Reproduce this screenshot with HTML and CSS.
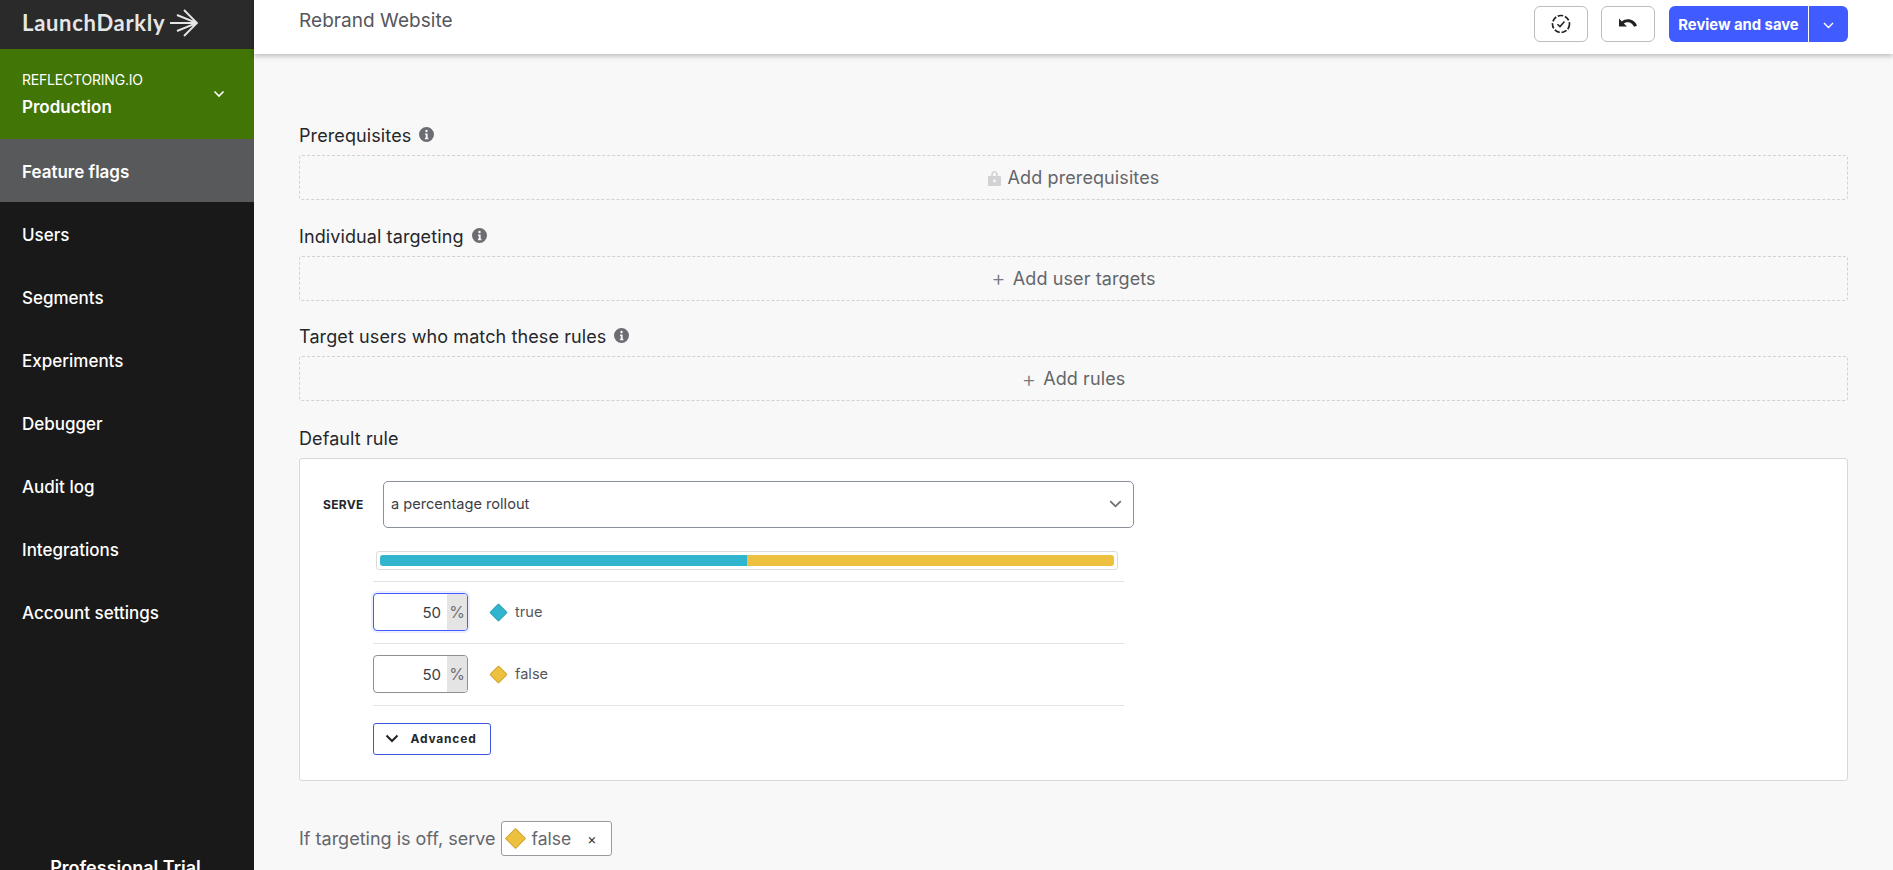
FILE: index.html
```html
<!DOCTYPE html>
<html lang="en">
<head>
    <meta charset="UTF-8">
    <title>Rebrand Website</title>
    <link rel="stylesheet" href="styles.css">
</head>
<body>
<div class="app">
    <aside class="sidebar">
        <div class="logo">
            <span class="logo-text">LaunchDarkly</span>
            <svg class="logo-arrow" width="28" height="28" viewBox="0 0 28 28" fill="none" stroke="#e6e6e6" stroke-width="1.9">
                <path d="M0 14H27M14 1L27 14L14 27M7 6L27 14L7 22"/>
            </svg>
        </div>
        <div class="env">
            <div>
                <div class="env-project">REFLECTORING.IO</div>
                <div class="env-name">Production</div>
            </div>
            <svg width="12" height="8" viewBox="0 0 12 8" fill="none" stroke="#fff" stroke-width="1.6"><path d="M1.5 1.5L6 6L10.5 1.5"/></svg>
        </div>
        <nav class="nav">
            <a class="nav-item active">Feature flags</a>
            <a class="nav-item">Users</a>
            <a class="nav-item">Segments</a>
            <a class="nav-item">Experiments</a>
            <a class="nav-item">Debugger</a>
            <a class="nav-item">Audit log</a>
            <a class="nav-item">Integrations</a>
            <a class="nav-item">Account settings</a>
        </nav>
        <div class="plan">Professional Trial</div>
    </aside>

    <div class="main">
        <header class="topbar">
            <div class="topbar-title">Rebrand Website</div>
            <div class="topbar-actions">
                <button class="icon-btn">
                    <svg width="20" height="20" viewBox="0 0 20 20" fill="none" stroke="#222" stroke-width="1.7">
                        <circle cx="10" cy="10" r="8.5" stroke-dasharray="5.500 1.800"/>
                        <path d="M6.500 10.200L9 12.600L13.500 7.600" stroke-width="1.500"/>
                    </svg>
                </button>
                <button class="icon-btn">
                    <svg width="20" height="13" viewBox="0 0 20 13"><path fill="#222" d="M1 .5V8.500H9L5.800 5.600C6.900 4.700 8.200 4.200 9.800 4.200C12.500 4.200 14.900 5.900 16 8.800L19 7.800C17.700 3.700 14.100 1.300 9.800 1.300C7.600 1.300 5.500 2.100 3.800 3.500Z"/></svg>
                </button>
                <div class="save-group">
                    <button class="save-btn">Review and save</button>
                    <button class="save-more">
                        <svg width="11" height="7" viewBox="0 0 11 7" fill="none" stroke="#fff" stroke-width="1.4"><path d="M1 1L5.500 5.500L10 1"/></svg>
                    </button>
                </div>
            </div>
        </header>

        <section class="content">
            <div class="block first">
                <div class="label">Prerequisites <svg class="info" viewBox="0 0 16 16"><use href="#info"/></svg></div>
                <div class="dashed">
                    <svg class="lock" width="13" height="16" viewBox="0 0 13 16"><path fill="#d2d2d4" d="M3.200 6V4.200C3.200 2.300 4.600 1 6.500 1S9.800 2.300 9.800 4.200V6H12.400C12.700 6 13 6.300 13 6.700V15.200C13 15.600 12.700 16 12.300 16H.7C.3 16 0 15.600 0 15.200V6.700C0 6.300.3 6 .7 6ZM4.900 6H8.100V4.200C8.100 3.200 7.400 2.600 6.500 2.600S4.900 3.200 4.900 4.200ZM6.500 9.600A1.400 1.400 0 1 0 6.500 12.400A1.400 1.400 0 1 0 6.500 9.600Z"/></svg>
                    Add prerequisites
                </div>
            </div>
            <div class="block">
                <div class="label">Individual targeting <svg class="info" viewBox="0 0 16 16"><use href="#info"/></svg></div>
                <div class="dashed"><span class="plus">+</span> Add user targets</div>
            </div>
            <div class="block">
                <div class="label">Target users who match these rules <svg class="info" viewBox="0 0 16 16"><use href="#info"/></svg></div>
                <div class="dashed"><span class="plus">+</span> Add rules</div>
            </div>
            <div class="block card-block">
                <div class="label">Default rule</div>
                <div class="rule-card">
                    <div class="serve-row">
                        <span class="serve-label">SERVE</span>
                        <div class="select">
                            <span>a percentage rollout</span>
                            <svg width="13" height="8" viewBox="0 0 13 8" fill="none" stroke="#6b6f76" stroke-width="1.8"><path d="M1.200 1.200L6.500 6.300L11.800 1.200"/></svg>
                        </div>
                    </div>
                    <div class="rollout">
                        <div class="bar">
                            <div class="bar-part teal" style="width: 50%"></div>
                            <div class="bar-part yellow" style="width: 50%"></div>
                        </div>
                        <div class="variation">
                            <div class="pct focused"><span class="pct-value">50</span><span class="pct-sign">%</span></div>
                            <span class="diamond teal"></span>
                            <span class="variation-name">true</span>
                        </div>
                        <div class="variation">
                            <div class="pct"><span class="pct-value">50</span><span class="pct-sign">%</span></div>
                            <span class="diamond yellow"></span>
                            <span class="variation-name">false</span>
                        </div>
                        <button class="advanced">
                            <svg width="14" height="9" viewBox="0 0 14 9" fill="none" stroke="#222" stroke-width="2"><path d="M1.500 1.500L7 7L12.500 1.500"/></svg>
                            Advanced
                        </button>
                    </div>
                </div>
            </div>
            <div class="off-row">
                <span>If targeting is off, serve</span>
                <div class="off-tag">
                    <span class="diamond yellow large"></span>
                    <span class="off-name">false</span>
                    <span class="off-x">×</span>
                </div>
            </div>
        </section>
    </div>
</div>

<svg width="0" height="0" class="defs">
    <symbol id="info" viewBox="0 0 16 16">
        <path fill="#6b6d72" fill-rule="evenodd" d="M8 0a8 8 0 1 0 0 16A8 8 0 0 0 8 0ZM8 3a1.300 1.300 0 1 1 0 2.600A1.300 1.300 0 0 1 8 3ZM6.500 7H9.200V11.500H10V13H6.300V11.500H7.200V8.500H6.500Z"/>
    </symbol>
</svg>
</body>
</html>
```

FILE: styles.css
```css
* {
    box-sizing: border-box;
}

html, body {
    margin: 0;
    height: 870px;
    overflow: hidden;
}

body {
    font-family: Inter, "Noto Sans", sans-serif;
    background: #f8f8f8;
    color: #25272b;
}

button {
    font-family: inherit;
    cursor: pointer;
}

.defs {
    position: absolute;
}

.app {
    display: flex;
    height: 870px;
}

/* sidebar */
.sidebar {
    width: 254px;
    flex-shrink: 0;
    height: 870px;
    background: #191919;
    color: #fff;
    display: flex;
    flex-direction: column;
}

.logo {
    height: 49px;
    background: #2a2a2a;
    display: flex;
    align-items: center;
    padding: 0 0 4px 22px;
    gap: 5px;
}

.logo-text {
    font-family: Lato, sans-serif;
    font-size: 22px;
    font-weight: 700;
    color: #e6e6e6;
    letter-spacing: 0.7px;
}

.env {
    height: 90px;
    background: #417505;
    display: flex;
    align-items: center;
    justify-content: space-between;
    padding: 0 29px 0 22px;
}

.env-project {
    font-size: 14px;
    letter-spacing: -0.2px;
    line-height: 17px;
    margin-top: -1px;
}

.env-name {
    font-size: 17px;
    font-weight: 600;
    line-height: 20px;
    margin-top: 9px;
}

.nav-item {
    display: flex;
    align-items: center;
    height: 63px;
    padding: 2px 0 0 22px;
    font-size: 17px;
    font-weight: 500;
}

.nav-item.active {
    background: #58595b;
    font-weight: 600;
}

.plan {
    margin-top: auto;
    height: 12px;
    padding-right: 3px;
    text-align: center;
    font-size: 18px;
    font-weight: 600;
    line-height: 20px;
    white-space: nowrap;
}

/* top bar */
.main {
    flex: 1;
    min-width: 0;
}

.topbar {
    height: 54px;
    background: #fff;
    box-shadow: 0 2px 5px rgba(0, 0, 0, 0.25);
    display: flex;
    justify-content: space-between;
    padding: 0 45px;
}

.topbar-title {
    font-size: 19px;
    letter-spacing: 0.05px;
    color: #55575c;
    line-height: 22px;
    padding-top: 10px;
}

.topbar-actions {
    display: flex;
    gap: 13px;
    padding-top: 6px;
}

.icon-btn {
    width: 54px;
    height: 36px;
    background: #fff;
    border: 1px solid #bdbdbd;
    border-radius: 6px;
    display: flex;
    align-items: center;
    justify-content: center;
    padding: 0;
}

.save-group {
    display: flex;
    height: 36px;
    margin-left: 1px;
}

.save-btn {
    width: 140px;
    border: none;
    background: #405bff;
    color: #fff;
    font-size: 14.8px;
    font-weight: 700;
    border-radius: 6px 0 0 6px;
    padding: 2px 0 0;
    border-right: 1px solid #fff;
}

.save-more {
    width: 39px;
    border: none;
    background: #405bff;
    border-radius: 0 6px 6px 0;
    padding: 0;
}

/* page content */
.content {
    padding: 0 45px;
}

.block {
    margin-top: 24.5px;
}

.block.first {
    margin-top: 70px;
}

.block.card-block {
    margin-top: 25.5px;
}

.label {
    font-size: 18px;
    letter-spacing: 0.1px;
    line-height: 22px;
    height: 31px;
    padding-top: 1px;
    display: flex;
    align-items: flex-start;
    gap: 8px;
    white-space: nowrap;
}

.info {
    width: 15px;
    height: 15px;
    margin-top: 2px;
}

.dashed {
    height: 45px;
    border: 1px dashed #d2d2d2;
    border-radius: 3px;
    display: flex;
    align-items: center;
    justify-content: center;
    gap: 7px;
    font-size: 18px;
    letter-spacing: 0.1px;
    color: #64666b;
}

.plus {
    font-size: 22px;
    color: #77797e;
    line-height: 20px;
    font-weight: 300;
}

.rule-card {
    height: 323px;
    background: #fff;
    border: 1px solid #d8d8d8;
    border-radius: 3px;
    padding: 22px 0 0 23px;
}

.serve-row {
    display: flex;
    align-items: center;
}

.serve-label {
    width: 60px;
    font-size: 12px;
    font-weight: 700;
    letter-spacing: 0.3px;
}

.select {
    width: 751px;
    height: 47px;
    border: 1px solid #8a9098;
    border-radius: 5px;
    display: flex;
    align-items: center;
    justify-content: space-between;
    padding: 0 11px 0 7px;
    font-size: 14.6px;
    color: #3c3e44;
}

.rollout {
    width: 751px;
    margin: 23px 0 0 50px;
}

.bar {
    height: 19px;
    width: 742px;
    margin-left: 3px;
    border: 1px solid #dcdcdc;
    border-radius: 3px;
    padding: 3px;
    display: flex;
}

.bar-part {
    height: 100%;
}

.bar-part.teal {
    background: #31b5cf;
    border-radius: 3px 0 0 3px;
}

.bar-part.yellow {
    background: #edc13f;
    border-radius: 0 3px 3px 0;
}

.variation {
    height: 62px;
    border-top: 1px solid #e3e3e3;
    display: flex;
    align-items: center;
}

.variation:nth-child(2) {
    margin-top: 11px;
}

.variation:nth-child(3) {
    border-bottom: 1px solid #e3e3e3;
    height: 63px;
}

.pct {
    width: 95px;
    height: 38px;
    border: 1px solid #8f8f8f;
    border-radius: 4px;
    display: flex;
    background: #fff;
    overflow: hidden;
}

.pct.focused {
    border-color: #405bff;
    box-shadow: 0 0 0 2px #ecefff;
}

.pct-value {
    flex: 1;
    text-align: right;
    padding-right: 6px;
    font-size: 15px;
    line-height: 37px;
    color: #3c3e44;
}

.pct-sign {
    width: 20px;
    background: #e4e4e4;
    font-size: 16px;
    line-height: 36px;
    text-align: center;
    color: #6f7176;
}

.diamond {
    width: 13px;
    height: 13px;
    transform: rotate(45deg);
    border-radius: 1px;
    margin: 0 10px 0 24px;
    flex-shrink: 0;
}

.diamond.teal {
    background: #31b5cf;
    border: 1px solid #2aa2ba;
}

.diamond.yellow {
    background: #edc13f;
    border: 1px solid #cfa632;
}

.variation-name {
    font-size: 14.6px;
    color: #55575c;
}

.advanced {
    margin-top: 17px;
    width: 118px;
    height: 32px;
    background: #fff;
    border: 1px solid #3a53e0;
    border-radius: 3px;
    display: flex;
    align-items: center;
    justify-content: center;
    gap: 11px;
    font-size: 12px;
    font-weight: 700;
    letter-spacing: 0.8px;
    color: #25272b;
    padding: 0 2px 0 0;
}

.off-row {
    margin-top: 40px;
    display: flex;
    align-items: center;
    gap: 5px;
    font-size: 18px;
    color: #64666b;
}

.off-tag {
    width: 111px;
    height: 35px;
    background: #fff;
    border: 1px solid #9a9a9a;
    border-radius: 3px;
    display: flex;
    align-items: center;
    font-size: 17.5px;
    color: #64666b;
}

.diamond.large {
    width: 15px;
    height: 15px;
    margin: 0 9px 0 6px;
}

.off-x {
    margin-left: 16px;
    font-size: 14px;
    color: #333;
}
```
